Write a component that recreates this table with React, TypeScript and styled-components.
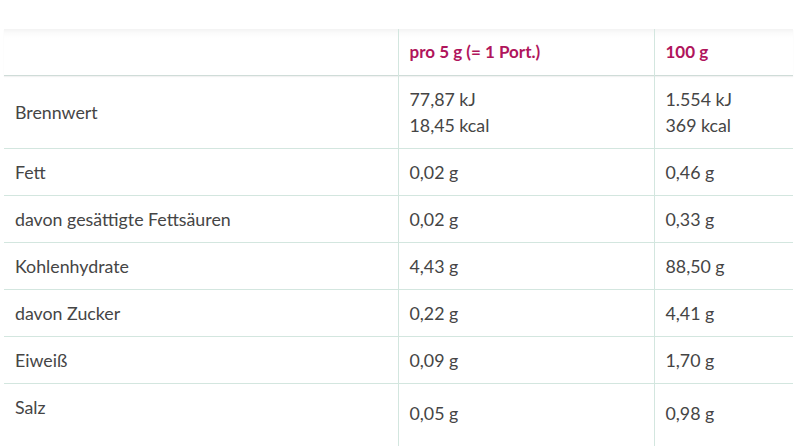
import React from "react";
import styled, { createGlobalStyle } from "styled-components";

const Global = createGlobalStyle`
  html, body { margin: 0; padding: 0; background: #fff; }
  body { font-family: Lato, "Open Sans", sans-serif; }
`;

const Page = styled.div`
  padding: 29px 16px 0 4px;
`;

const Table = styled.table`
  width: 789px;
  border-collapse: collapse;
  table-layout: fixed;
  font-family: Lato, "Open Sans", sans-serif;
  font-size: 17.8px;
  line-height: 26px;
  color: #454545;
`;

const HeadRow = styled.tr`
  background: linear-gradient(#f3f3f3 0px, #fbfbfb 4px, #ffffff 9px);
  border-bottom: 1px solid #cfdcd8;
  box-shadow: 0 1px 1px rgba(0, 0, 0, 0.05);
`;

const Th = styled.th<{ $first?: boolean }>`
  text-align: left;
  font-weight: 700;
  font-size: 17px;
  color: #b0155c;
  padding: 10px 11px;
  height: 26px;
  border-left: ${(p) => (p.$first ? "none" : "1px solid #d3e6df")};
`;

const Row = styled.tr<{ $last?: boolean }>`
  border-bottom: ${(p) => (p.$last ? "none" : "1px solid #d3e6df")};
`;

const Label = styled.td<{ $top?: boolean }>`
  padding: 10px 11px;
  vertical-align: ${(p) => (p.$top ? "top" : "middle")};
`;

const Value = styled.td<{ $low?: boolean }>`
  padding: ${(p) => (p.$low ? "16px 11px 22px" : "10px 11px")};
  border-left: 1px solid #d3e6df;
  vertical-align: top;
`;

type Item = { label: string; a: string[]; b: string[] };

const rows: Item[] = [
  { label: "Brennwert", a: ["77,87 kJ", "18,45 kcal"], b: ["1.554 kJ", "369 kcal"] },
  { label: "Fett", a: ["0,02 g"], b: ["0,46 g"] },
  { label: "davon gesättigte Fettsäuren", a: ["0,02 g"], b: ["0,33 g"] },
  { label: "Kohlenhydrate", a: ["4,43 g"], b: ["88,50 g"] },
  { label: "davon Zucker", a: ["0,22 g"], b: ["4,41 g"] },
  { label: "Eiweiß", a: ["0,09 g"], b: ["1,70 g"] },
  { label: "Salz", a: ["0,05 g"], b: ["0,98 g"] },
];

const Lines = ({ items }: { items: string[] }) => (
  <>
    {items.map((t, i) => (
      <div key={i}>{t}</div>
    ))}
  </>
);

export default function App() {
  return (
    <>
      <Global />
      <Page>
        <Table>
          <colgroup>
            <col style={{ width: 394 }} />
            <col style={{ width: 256 }} />
            <col style={{ width: 139 }} />
          </colgroup>
          <thead>
            <HeadRow>
              <Th $first></Th>
              <Th>pro 5 g (= 1 Port.)</Th>
              <Th>100 g</Th>
            </HeadRow>
          </thead>
          <tbody>
            {rows.map((r, i) => {
              const last = i === rows.length - 1;
              return (
                <Row key={r.label} $last={last}>
                  <Label $top={last}>{r.label}</Label>
                  <Value $low={last}>
                    <Lines items={r.a} />
                  </Value>
                  <Value $low={last}>
                    <Lines items={r.b} />
                  </Value>
                </Row>
              );
            })}
          </tbody>
        </Table>
      </Page>
    </>
  );
}
